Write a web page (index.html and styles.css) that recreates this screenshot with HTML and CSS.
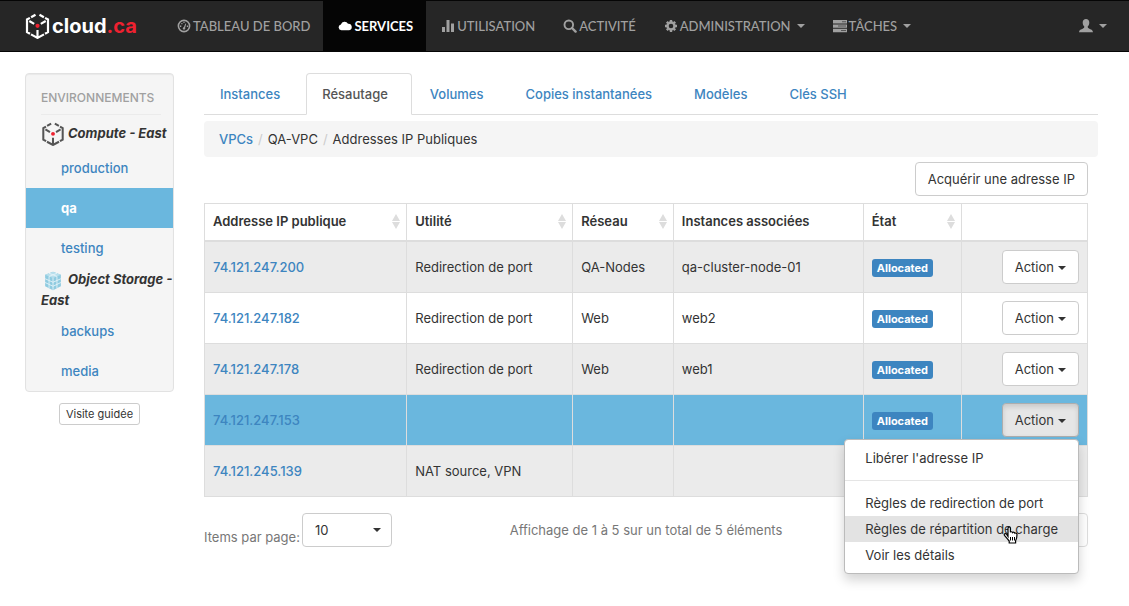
FILE: index.html
```html
<!DOCTYPE html>
<html lang="fr">
<head>
<meta charset="utf-8">
<meta name="viewport" content="width=device-width, initial-scale=1">
<title>cloud.ca - Addresses IP Publiques</title>
<link rel="stylesheet" href="styles.css">
</head>
<body>
<svg class="defs" aria-hidden="true">
  <symbol id="cube" viewBox="0 0 24 26">
    <path d="M10 1.700 5.600 4.200M14 1.700l4.400 2.500M4.400 4.900 1.500 6.500v12.600l3 1.700M19.600 4.900l2.900 1.600v12.600l-3 1.700M5.500 21.400l6.500 3.500 6.500-3.500M12 17v8M3.800 8l4.900 2.900M20.200 8l-4.900 2.900" fill="none" stroke="currentColor" stroke-width="2.200"/>
    <circle cx="12" cy="12.800" r="2.100" fill="#ee2130"/>
  </symbol>
</svg>
<header class="navbar">
  <a class="brand" href="#"><svg class="brand-mark" aria-hidden="true"><use href="#cube"/></svg><span>cloud<span class="brand-tld">.ca</span></span></a>
  <nav class="nav">
    <a class="nav-link" href="#"><svg class="icon" viewBox="0 0 14 14" aria-hidden="true"><circle cx="7" cy="7" r="5.600" fill="none" stroke="currentColor" stroke-width="1.600"/><path d="M6.200 9.800 8.400 4.400l.8.3-1.400 5.200z" fill="currentColor"/><circle cx="7" cy="9.400" r="1.200" fill="currentColor"/><path d="M3 6.600h1.300v1.300H3zM4.300 4h1.200v1.200H4.300zM6.400 2.800h1.200V4H6.400zM9.800 6.600h1.300v1.300H9.800z" fill="currentColor"/></svg>TABLEAU DE BORD</a>
    <a class="nav-link nav-link-active" href="#" aria-current="page"><svg class="icon" viewBox="0 0 14 14" aria-hidden="true"><path d="M3.400 11.300a3 3 0 0 1-.5-5.900A3.900 3.900 0 0 1 10 4.700a3.300 3.300 0 0 1 .8 6.600z" fill="currentColor"/></svg>SERVICES</a>
    <a class="nav-link" href="#"><svg class="icon" viewBox="0 0 14 14" aria-hidden="true"><path d="M1 8h3v5H1zM5.500 1h3v12h-3zM10 4.500h3V13h-3z" fill="currentColor"/></svg>UTILISATION</a>
    <a class="nav-link" href="#"><svg class="icon" viewBox="0 0 14 14" aria-hidden="true"><circle cx="5.800" cy="5.800" r="4.300" fill="none" stroke="currentColor" stroke-width="1.900"/><path d="m9 9 3.600 3.600" stroke="currentColor" stroke-width="2.400" stroke-linecap="round"/></svg>ACTIVITÉ</a>
    <a class="nav-link" href="#"><svg class="icon" viewBox="0 0 14 14" aria-hidden="true"><circle cx="7" cy="7" r="3.500" fill="none" stroke="currentColor" stroke-width="2.400"/><g stroke="currentColor" stroke-width="2.400"><path d="M7 1v2M7 11v2M1 7h2M11 7h2M2.800 2.800l1.400 1.400M9.800 9.800l1.400 1.400M11.200 2.800 9.800 4.200M4.200 9.800l-1.400 1.400"/></g></svg>ADMINISTRATION<span class="caret"></span></a>
    <a class="nav-link" href="#"><svg class="icon" viewBox="0 0 14 14" aria-hidden="true"><path d="M0 1h14v3.400H0zM0 5.400h14v3.400H0zM0 9.800h14v3.400H0z" fill="currentColor"/><path d="M9 2.200h4v1H9zM5 6.600h8v1H5zM8 11h5v1H8z" fill="#555"/></svg>TÂCHES<span class="caret"></span></a>
  </nav>
  <button class="user-menu" type="button" aria-label="Compte"><svg class="icon" viewBox="0 0 14 14" aria-hidden="true"><path d="M7 0c2 0 3.300 1.400 3.300 3.600 0 1.800-.7 3.200-1.600 4 0 1.300.4 1.700 2 2.300 2 .7 3 1 3.300 3.300H0c.2-2.300 1.300-2.600 3.300-3.300 1.600-.6 2-1 2-2.300-.9-.8-1.600-2.200-1.600-4C3.700 1.400 5 0 7 0z" fill="currentColor"/></svg><span class="caret"></span></button>
</header>
<div class="page">
  <aside class="sidebar">
    <nav class="env" aria-label="Environnements">
      <h2 class="env-title">ENVIRONNEMENTS</h2>
      <h3 class="env-group"><svg class="env-icon env-icon-cube" aria-hidden="true"><use href="#cube"/></svg>Compute - East</h3>
      <a class="env-link" href="#">production</a>
      <a class="env-link env-link-active" href="#">qa</a>
      <a class="env-link" href="#">testing</a>
      <h3 class="env-group"><svg class="env-icon" viewBox="0 0 24 24" aria-hidden="true"><path d="M12 2 21 5.500v13L12 23l-9-4.500v-13z" fill="#8fcbe0"/><path d="m12 2 9 3.500L12 9 3 5.500z" fill="#b8dfec"/><path d="M12 9v14M3 10l9 4 9-4M3 14.300l9 4.300 9-4.300M7.500 7.300v13.400M16.500 7.300v13.400M7.500 3.800l9 3.500M16.500 3.800l-9 3.500" fill="none" stroke="#e6f4f9"/></svg>Object Storage - East</h3>
      <a class="env-link" href="#">backups</a>
      <a class="env-link" href="#">media</a>
    </nav>
    <button class="btn btn-small" type="button">Visite guidée</button>
  </aside>
  <main class="main">
    <nav class="tabs" aria-label="Sections">
      <a class="tab" href="#">Instances</a>
      <a class="tab tab-active" href="#" aria-current="page">Résautage</a>
      <a class="tab" href="#">Volumes</a>
      <a class="tab" href="#">Copies instantanées</a>
      <a class="tab" href="#">Modèles</a>
      <a class="tab" href="#">Clés SSH</a>
    </nav>
    <nav class="breadcrumb" aria-label="Fil d'Ariane">
      <a href="#">VPCs</a><span class="sep">/</span><span>QA-VPC</span><span class="sep">/</span><span>Addresses IP Publiques</span>
    </nav>
    <div class="content">
      <div class="toolbar"><button class="btn" type="button">Acquérir une adresse IP</button></div>
      <table class="table">
        <colgroup><col class="col-ip"><col class="col-use"><col class="col-net"><col class="col-inst"><col class="col-state"><col></colgroup>
        <thead>
          <tr><th class="sortable">Addresse IP publique</th><th class="sortable">Utilité</th><th class="sortable">Réseau</th><th>Instances associées</th><th class="sortable">État</th><th></th></tr>
        </thead>
        <tbody>
          <tr><td><a href="#">74.121.247.200</a></td><td>Redirection de port</td><td>QA-Nodes</td><td>qa-cluster-node-01</td><td><span class="label">Allocated</span></td><td class="actions"><button class="btn" type="button">Action<span class="caret"></span></button></td></tr>
          <tr><td><a href="#">74.121.247.182</a></td><td>Redirection de port</td><td>Web</td><td>web2</td><td><span class="label">Allocated</span></td><td class="actions"><button class="btn" type="button">Action<span class="caret"></span></button></td></tr>
          <tr><td><a href="#">74.121.247.178</a></td><td>Redirection de port</td><td>Web</td><td>web1</td><td><span class="label">Allocated</span></td><td class="actions"><button class="btn" type="button">Action<span class="caret"></span></button></td></tr>
          <tr class="selected"><td><a href="#">74.121.247.153</a></td><td></td><td></td><td></td><td><span class="label">Allocated</span></td><td class="actions">
            <div class="dropdown">
              <button class="btn btn-open" type="button" aria-expanded="true">Action<span class="caret"></span></button>
              <div class="menu">
                <a class="menu-item" href="#">Libérer l'adresse IP</a>
                <hr class="menu-divider">
                <a class="menu-item" href="#">Règles de redirection de port</a>
                <a class="menu-item menu-item-hover" href="#">Règles de répartition de charge<svg class="cursor" viewBox="0 0 16 18" aria-hidden="true"><path d="M5 10.500V2.300C5 .5 7.400.5 7.400 2.300v4c.4-.8 2-.7 2.300.3.600-.7 2-.4 2.200.6.800-.5 2.100 0 2.100 1.300 0 3.200-.5 4.700-1.400 6.200V17H6.200v-2C4.800 13.300 3 11.200 1.400 9.400.6 8 2.300 7 3.400 8z" fill="#fff" stroke="#000" stroke-width="1.200"/><path d="M7.500 11v3.500M9.500 11v3.500M11.500 11v3.500" stroke="#000"/></svg></a>
                <a class="menu-item" href="#">Voir les détails</a>
              </div>
            </div></td></tr>
          <tr><td><a href="#">74.121.245.139</a></td><td>NAT source, VPN</td><td></td><td></td><td></td><td class="actions"><button class="btn" type="button">Action<span class="caret"></span></button></td></tr>
        </tbody>
      </table>
      <div class="table-footer">
        <div class="page-size">
          <label for="page-size">Items par page:</label>
          <select id="page-size"><option>10</option><option>25</option><option>50</option></select>
        </div>
        <p class="summary">Affichage de 1 à 5 sur un total de 5 éléments</p>
        <div class="pager"><button class="btn pager-btn" type="button" aria-label="Page suivante"></button></div>
      </div>
    </div>
  </main>
</div>
</body>
</html>
```
FILE: styles.css
```css
* { box-sizing: border-box; }
body {
  min-height: 100vh;
  margin: 0;
  background: #fff;
  color: #333;
  font: 13px/20px Inter, "Open Sans", sans-serif;
}
a { color: #3d85c0; text-decoration: none; }
button, select { font: inherit; color: inherit; }
.defs { position: absolute; width: 0; height: 0; }

.navbar {
  display: flex;
  align-items: stretch;
  min-height: 52px;
  padding: 0 22px 0 25px;
  background: #262626;
  border: 1px solid #050505;
  border-width: 1px 0;
}
.brand {
  display: flex;
  align-items: center;
  gap: 2px;
  width: 137px;
  color: #fff;
  font-size: 20px;
  font-weight: 700;
}
.brand-mark { width: 25px; height: 26px; }
.brand-tld { color: #ee2130; }
.nav { display: flex; flex: 1; }
.nav-link {
  display: flex;
  align-items: center;
  padding: 0 13px 0 15px;
  color: #a0a0a0;
  font-family: Lato, Inter, sans-serif;
  font-weight: 500;
  white-space: nowrap;
}
.nav-link-active { background: #050505; color: #fff; font-weight: 700; }
.icon { width: 14px; height: 14px; margin-right: 2px; }
.caret {
  display: inline-block;
  margin-left: 4px;
  border: 4px solid transparent;
  border-top-color: currentColor;
  border-bottom: 0;
  vertical-align: middle;
}
.nav-link .caret { margin-left: 6px; }
.user-menu {
  display: flex;
  align-items: center;
  padding: 0;
  border: 0;
  background: none;
  color: #a0a0a0;
}

.page { display: flex; gap: 30px; padding: 21px 31px 58px 25px; }
.sidebar { flex: none; width: 149px; text-align: center; }
.env {
  margin-bottom: 11px;
  background: #f5f5f5;
  border: 1px solid #e2e2e2;
  border-radius: 4px;
  box-shadow: inset 0 1px 1px rgba(0, 0, 0, .05);
  text-align: left;
}
.env-title {
  margin: 0 12px 0 15px;
  padding: 14px 0 6px;
  border-bottom: 1px solid #ebebeb;
  color: #a0a0a0;
  font-size: 12px;
  font-weight: 500;
}
.env-group {
  margin: 0;
  padding: 1px 0 0 15px;
  font-size: 13px;
  font-style: italic;
  font-weight: 700;
  line-height: 21px;
}
.env-title + .env-group { padding-top: 8px; padding-bottom: 4px; white-space: nowrap; }
.env-icon { width: 24px; height: 21px; margin: -3px 3px -3px 0; vertical-align: middle; }
.env-icon-cube { height: 24px; color: #555; }
.env-link { display: block; padding: 10px 35px; font-weight: 500; }
.env-link-active { background: #6ab7de; color: #fff; font-weight: 700; }

.btn {
  padding: 6px 12px;
  background: #fff;
  border: 1px solid #ccc;
  border-radius: 4px;
}
.btn-small { padding: 1px 6px; border-radius: 3px; font-size: 11px; line-height: 18px; }
.btn-open {
  background: #e6e6e6;
  border-color: #adadad;
  box-shadow: inset 0 3px 5px rgba(0, 0, 0, .125);
}

.main { flex: 1; min-width: 0; }
.tabs { display: flex; gap: 2px; border-bottom: 1px solid #ddd; }
.tab {
  margin-bottom: -1px;
  padding: 10px 23px 10px 15px;
  border: 1px solid transparent;
  border-radius: 4px 4px 0 0;
  font-weight: 500;
  white-space: nowrap;
}
.tab-active {
  background: #fff;
  border-color: #ddd;
  border-bottom-color: #fff;
  color: #555;
}
.breadcrumb {
  margin: 6px 0 5px;
  padding: 8px 15px;
  background: #f5f5f5;
  border-radius: 4px;
}
.breadcrumb a { font-weight: 500; }
.sep { padding: 0 5px; color: #ccc; }
.content { padding-right: 10px; }
.toolbar { display: flex; justify-content: flex-end; margin-bottom: 7px; }

.table {
  width: 100%;
  table-layout: fixed;
  border-collapse: collapse;
}
.col-ip { width: 22.9%; }
.col-use { width: 18.8%; }
.col-net { width: 11.4%; }
.col-inst { width: 21.5%; }
.col-state { width: 11.1%; }
.table th, .table td {
  height: 51px;
  padding: 8px;
  border: 1px solid #ddd;
  text-align: left;
}
.table th {
  height: 37px;
  padding-top: 7px;
  border-bottom-width: 2px;
  font-weight: 600;
  white-space: nowrap;
}
.table td a { font-weight: 500; }
.table td .menu-item { font-weight: 400; }
.table tbody tr:nth-child(odd) { background: #ebebeb; }
.table tbody tr.selected { background: #6ab7de; }
.sortable {
  background: url("data:image/svg+xml,%3Csvg xmlns='http://www.w3.org/2000/svg' width='8' height='15'%3E%3Cpath d='M0 7l4-7 4 7zM0 8h8l-4 7z' fill='%23ddd'/%3E%3C/svg%3E") no-repeat right 6px center;
}
.label {
  display: inline-block;
  padding: 0 5px;
  background: #3d85c0;
  border-radius: 3px;
  color: #fff;
  font-size: 11px;
  font-weight: 700;
  line-height: 18px;
  vertical-align: middle;
}
.table .actions { text-align: right; }

.dropdown { position: relative; display: inline-block; }
.menu {
  position: absolute;
  top: 100%;
  right: 0;
  z-index: 10;
  margin-top: 2px;
  padding: 5px 0;
  background: #fff;
  border: 1px solid #bbb;
  border-radius: 4px;
  box-shadow: 0 6px 12px rgba(0, 0, 0, .175);
  text-align: left;
  white-space: nowrap;
}
.menu-item { position: relative; display: block; padding: 3px 20px; color: #333; }
.menu-item-hover { background: #e3e3e3; }
.menu-divider { height: 1px; margin: 9px 0; border: 0; background: #e5e5e5; }
.cursor { position: absolute; right: 59px; top: 10px; width: 16px; height: 18px; }

.table-footer {
  display: grid;
  grid-template-columns: 1fr auto 1fr;
  align-items: center;
  margin-top: 16px;
  color: #777;
}
.page-size { display: flex; align-items: flex-end; gap: 2px; }
.page-size select {
  width: 90px;
  height: 34px;
  padding: 0 12px;
  appearance: none;
  background: #fff url("data:image/svg+xml,%3Csvg xmlns='http://www.w3.org/2000/svg' width='8' height='4'%3E%3Cpath d='M0 0h8L4 4z' fill='%23333'/%3E%3C/svg%3E") no-repeat right 10px center;
  border: 1px solid #ccc;
  border-radius: 4px;
  color: #333;
}
.summary { margin: 0; }
.pager { text-align: right; }
.pager-btn { width: 34px; height: 34px; vertical-align: top; border-color: #ddd; }
```
